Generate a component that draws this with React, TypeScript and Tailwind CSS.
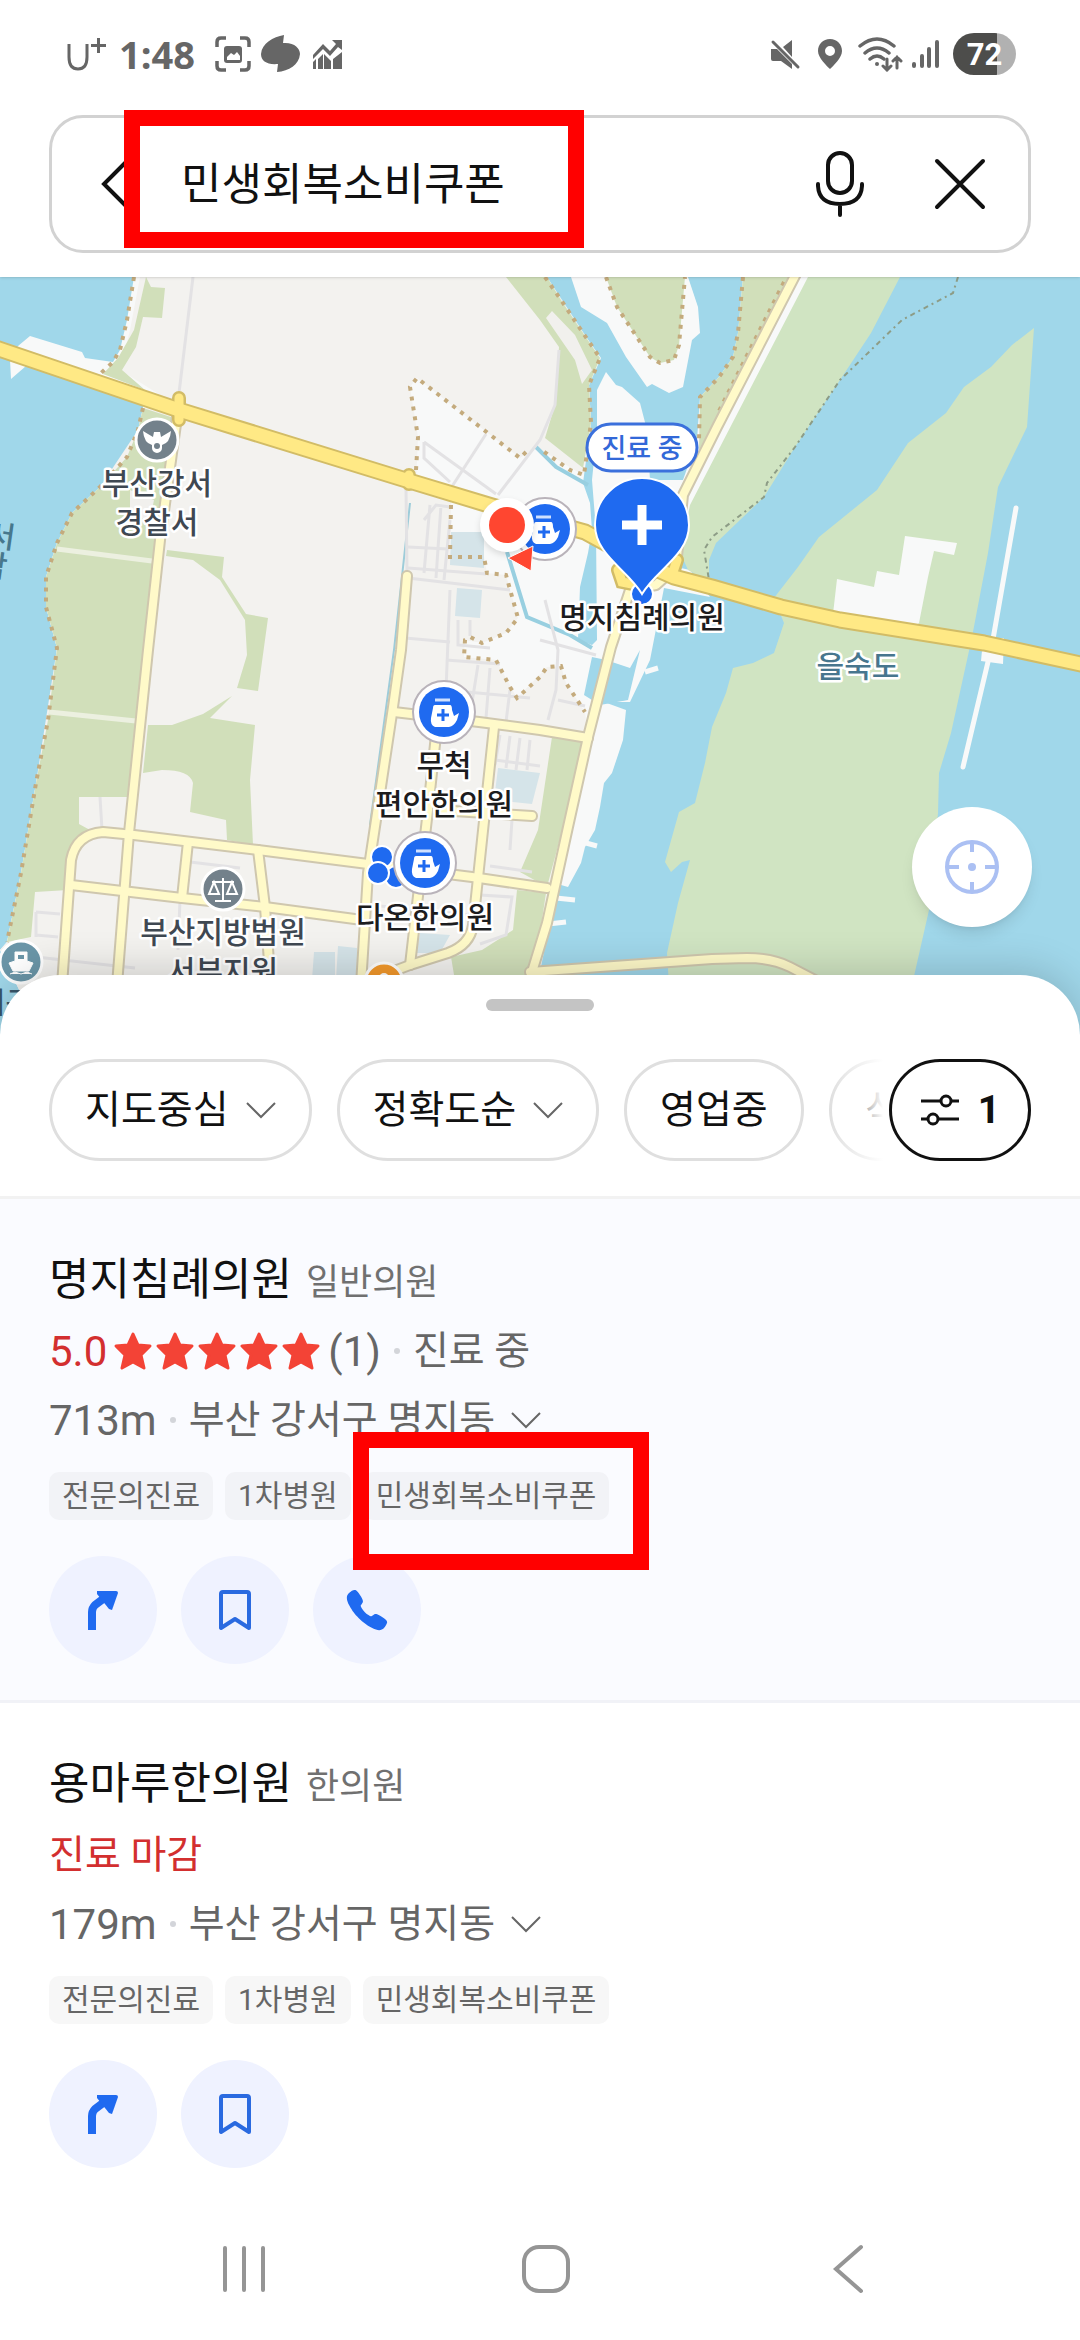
import { IoCall } from "react-icons/io5"

const filters = [
  { title: "지도중심", dropdown: true },
  { title: "정확도순", dropdown: true },
  { title: "영업중", dropdown: false },
  { title: "식당", dropdown: false },
]

const tags = ["전문의진료", "1차병원", "민생회복소비쿠폰"]

const places = [
  {
    name: "명지침례의원",
    category: "일반의원",
    rating: "5.0",
    reviews: 1,
    status: "진료 중",
    distance: "713m",
    address: "부산 강서구 명지동",
    phone: true,
    selected: true,
  },
  {
    name: "용마루한의원",
    category: "한의원",
    rating: "",
    reviews: 0,
    status: "진료 마감",
    distance: "179m",
    address: "부산 강서구 명지동",
    phone: false,
    selected: false,
  },
]

const clinics = [
  { x: 545, y: 529 },
  { x: 444, y: 712 },
  { x: 425, y: 863 },
]

const mainRoad =
  "M-10 346 L179 410 L406 480 L492 506 L585 532 L640 562 L674 577 L712 587 L781 607 L840 620 L984 643 L1090 666"

const localRoads = [
  "M177 417 L160 540 L148 650 L129 833 L117 985",
  "M407 576 L401 650 L393 707 L382 780 L368 873 L361 985",
  "M394 712 L479 722 L540 730 L588 738",
  "M436 735 L428 810 L410 965",
  "M494 727 L482 840 L473 925 Q470 945 448 953 L410 965 L370 980",
  "M437 810 L532 816",
  "M62 985 L71 860 Q76 834 103 832 L134 835 L258 850 L368 864 L472 877 L547 888",
  "M71 885 L182 898 L265 907 L362 920",
  "M188 842 L182 898",
  "M258 850 L265 907 L269 962",
  "M798 270 L717 427 L683 495 L676 567 L656 585 L630 590 L611 647 L588 737 L568 827 L547 923 L528 985",
  "M530 972 L712 959 L747 958 Q772 958 790 967 L815 980",
]

const sideStreets = [
  "M193 277 L179 393",
  "M486 434 L451 488",
  "M424 442 L424 458 L450 482 M424 442 L496 494",
  "M559 350 L555 405 L540 440 L498 495",
  "M406 488 L407 573",
  "M430 505 L424 573 M441 505 L436 578 M450 520 L444 580 M424 520 L436 505 L450 507",
  "M408 547 L448 549 M408 568 L486 574 M408 578 L510 590",
  "M405 638 L450 642 M450 590 L446 690 M458 620 L458 645 L490 648 M470 620 L470 636",
  "M446 660 L500 664 M446 690 L530 698 M478 665 L470 715 M490 668 L486 718 M510 690 L506 722",
  "M545 600 L558 650 L556 690 L548 720 M558 700 L585 706",
  "M540 640 L596 655",
  "M500 735 L495 765 M510 736 L506 768 M520 738 L516 770 M530 740 L527 770",
  "M100 797 L102 830 M36 912 L60 914 M36 935 L58 937 M36 912 L36 937",
  "M36 957 L135 968 M180 900 L178 950",
  "M190 862 L240 868 M370 905 L470 915 M480 895 L512 897 L506 935 L480 944",
  "M495 760 L540 766 M512 820 L510 850 M490 866 L532 872",
]

const dottedTrails = [
  "M134 277 L127 320 L120 350 L113 362 L101 373",
  "M143 408 L138 430 L127 457 L100 487 L72 513 L57 543 L46 577 L46 607 L57 648 L48 720 L36 783 L21 873 L7 942",
  "M416 470 L418 437 L410 387 L417 378 L520 458 L528 450",
  "M451 505 L450 557 L484 557 L487 573 L506 575 L518 618 L506 633 L482 643 L470 637 L465 640 L464 657 L496 660 L510 687 L517 698 L540 677 L547 667 L561 666 L566 683 L585 712",
  "M545 277 L561 300 L581 330 L600 358 L589 385 L591 423 L584 475 L570 470 L540 449",
  "M606 277 L617 307 L650 357 L660 363 L674 360 L679 345 L685 277",
  "M743 277 L738 333 L733 357 L719 377 L700 397 L699 440",
  "M784 282 L717 415",
]

function StatusBar() {
  return (
    <div className="flex h-[108px] items-center justify-between pl-[67px] pr-[64px] text-[#666]">
      <div className="flex items-center">
        <svg width="40" height="36" viewBox="0 0 40 36" fill="none" stroke="currentColor" aria-hidden="true">
          <path d="M2 8 V21 Q2 33 11 33 Q20 33 20 21 V8" strokeWidth="3" />
          <path d="M24 9.500 H39 M31.500 2 V17" strokeWidth="3" />
        </svg>
        <span className="ml-[12px] w-[96px] [font-family:'Open_Sans',sans-serif] text-[38px] font-bold leading-[50px]">1:48</span>
        <svg width="36" height="36" viewBox="0 0 36 36" fill="none" stroke="currentColor" strokeWidth="3.500" aria-hidden="true">
          <path d="M2 11 V6 Q2 2 6 2 H11 M25 2 H30 Q34 2 34 6 V11 M34 25 V30 Q34 34 30 34 H25 M11 34 H6 Q2 34 2 30 V25" />
          <rect x="9" y="10" width="18" height="17" rx="3" fill="currentColor" stroke="none" />
          <path d="M12 24 V21 L16 17 L19 19 L22 16 L25 20 V24 Z" fill="white" stroke="none" />
        </svg>
        <svg className="ml-[9px]" width="40" height="38" viewBox="0 0 40 38" fill="currentColor" aria-hidden="true">
          <path d="M24 0 L23 8 C34 7 40 13 40 19 C39 30 29 36 17 37 L18 29 C7 30 1 26 1 19 C2 8 13 2 24 0 Z" />
        </svg>
        <svg className="ml-[12px]" width="31" height="30" viewBox="0 0 31 30" fill="currentColor" aria-hidden="true">
          <path d="M20 1 H30 V11 L26 8 L18 17 L11 10 L1 20 V16 L11 5 L18 12 L24 5 Z" />
          <path d="M1 23 L4 20 V30 H1 Z M6 20 L11 15 V30 H6 Z M12 15 L19 22 V30 H12 Z M21 20 L30 13 V30 H21 Z" />
        </svg>
      </div>
      <div className="flex items-center">
        <svg width="32" height="32" viewBox="0 0 32 32" fill="currentColor" aria-hidden="true">
          <path d="M14 9 L23 2 V19 Z M2 11 H8 L23 26 V31 L12 23 H4 Q2 23 2 21 Z" />
          <path d="M4 4 L29 29" stroke="currentColor" strokeWidth="3" strokeLinecap="round" />
        </svg>
        <svg className="ml-[16px]" width="26" height="32" viewBox="0 0 26 32" fill="currentColor" fillRule="evenodd" aria-hidden="true">
          <path d="M13 1 C6 1 1 6 1 13 C1 20 10 28 13 31 C16 28 25 20 25 13 C25 6 20 1 13 1 Z M13 8 A5 5 0 1 1 13 18 A5 5 0 1 1 13 8 Z" />
        </svg>
        <svg className="ml-[15px]" width="46" height="36" viewBox="0 0 46 36" fill="none" stroke="currentColor" strokeWidth="3.500" strokeLinecap="round" aria-hidden="true">
          <path d="M2 10 Q19 -4 36 10 M7 17 Q19 7 31 17 M12 23 Q19 17 26 23" />
          <circle cx="19" cy="28" r="2" fill="currentColor" stroke="none" />
          <path d="M29 23 V34 M25 30 L29 34 L33 30 M39 32 V21 M35 25 L39 21 L43 25" strokeWidth="3" />
        </svg>
        <svg className="ml-[7px]" width="28" height="32" viewBox="0 0 28 32" stroke="currentColor" strokeWidth="4" strokeLinecap="round" aria-hidden="true">
          <path d="M3 26 V28 M11 18 V28 M18 11 V28 M26 4 V28" />
        </svg>
        <div className="ml-[14px] flex h-[42px] w-[63px] items-center justify-center overflow-hidden rounded-full bg-linear-to-r from-[#4d4d4b] from-70% to-[#b1b1b1] to-70% [font-family:Roboto,sans-serif] text-[31px] font-bold leading-none text-white">
          72
        </div>
      </div>
    </div>
  )
}

function SearchBar() {
  return (
    <form className="relative mx-[49px] mt-[7px] flex h-[138px] items-center rounded-[34px] border-[3px] border-[#d2d2d2] pl-[47px] pr-[42px]">
      <button type="button" aria-label="뒤로">
        <svg width="30" height="48" viewBox="0 0 30 48" fill="none" stroke="#111" strokeWidth="4">
          <path d="M27 2 L5 24 L27 46" />
        </svg>
      </button>
      <input
        aria-label="검색어"
        defaultValue="민생회복소비쿠폰"
        className="ml-[52px] h-[80px] min-w-0 flex-1 bg-transparent pb-[6px] text-[44px] text-[#111] outline-none"
      />
      <button type="button" aria-label="음성 검색">
        <svg width="50" height="68" viewBox="0 0 50 68" fill="none" stroke="#111" strokeWidth="4" strokeLinecap="round">
          <rect x="13" y="3" width="24" height="40" rx="12" />
          <path d="M3 34 V36 Q4 54 25 54 Q46 54 47 36 V34 M25 54 V65" />
        </svg>
      </button>
      <button type="button" aria-label="지우기" className="ml-[69px]">
        <svg width="52" height="52" viewBox="0 0 52 52" stroke="#111" strokeWidth="4" strokeLinecap="round">
          <path d="M3 3 L49 49 M49 3 L3 49" />
        </svg>
      </button>
      <div className="pointer-events-none absolute -top-[8px] left-[72px] h-[138px] w-[460px] border-[16px] border-[#ff0000]" />
    </form>
  )
}

function ClinicMarker({ x, y }: { x: number; y: number }) {
  return (
    <g transform={`translate(${x} ${y})`}>
      <circle r="31" fill="white" stroke="#b9b3ba" strokeWidth="2" />
      <circle r="25" fill="#1f6af0" />
      <path d="M-9 -12 H6" stroke="#cfe0ff" strokeWidth="3" />
      <path d="M-9 -7 H6 Q8 -7 8 -2 L10 4 L15 1 L13 8 Q10 14 5 15 H-9 Q-14 13 -13 6 L-11 -4 Q-11 -7 -9 -7 Z" fill="white" />
      <path d="M-1 -3 V9 M-7 3 H5" stroke="#1f6af0" strokeWidth="3" />
    </g>
  )
}

function MapView() {
  return (
    <svg
      className="block h-[763px] w-full"
      viewBox="0 277 1080 763"
      preserveAspectRatio="xMidYMin slice"
      role="img"
      aria-label="지도"
    >
      <rect y="277" width="1080" height="763" fill="#a0d7ea" />

      {/* west mainland */}
      <path
        d="M134 277 L127 320 L120 350 L113 362 L85 358 L82 352 L30 336 L18 346 L10 360 L11 379 L26 366 L143 402 L143 408 L138 430 L127 457 L100 487 L72 513 L57 543 L46 577 L46 607 L57 648 L48 720 L36 783 L21 873 L7 942 L0 950 L24 1000 L24 1040 L528 1040 L532 985 L547 933 L561 885 L568 887 L581 863 L585 847 L595 830 L600 807 L604 783 L612 773 L623 740 L626 710 L604 702 L630 702 L650 660 L664 588 L710 597 L690 570 L676 567 L810 277 L743 277 L738 333 L733 357 L719 377 L700 397 L697 440 L683 480 L650 480 L647 430 L640 403 L622 387 L616 385 L606 372 L597 390 L597 430 L592 480 L596 530 L597 640 L592 645 L578 640 L580 587 L588 553 L592 530 L590 503 L583 483 L591 423 L589 385 L601 358 L581 330 L561 300 L547 277 Z"
        fill="#f8f9f9"
      />
      <path
        d="M140 277 L130 330 L120 370 L178 406 L143 408 L138 430 L100 487 L57 543 L46 577 L46 607 L57 648 L36 783 L21 873 L7 942 L0 950 L24 1000 L24 1040 L526 1040 L588 737 L585 712 L566 683 L561 666 L547 667 L517 698 L496 660 L464 657 L465 640 L482 643 L506 633 L518 618 L506 575 L487 573 L484 557 L450 557 L451 500 L416 485 L418 437 L410 387 L417 378 L520 458 L536 447 L583 475 L591 423 L589 385 L600 358 L547 277 Z"
        fill="#f3f2ef"
      />
      <path d="M571 277 L581 307 L607 323 L626 357 L647 387 L652 384 L669 393 L683 387 L692 340 L700 333 L698 307 L688 277 Z" fill="#f8f9f9" />
      <path d="M592 657 L606 660 L630 668 L640 650 L628 700 L600 705 L584 695 Z" fill="#a0d7ea" />
      <path d="M598 660 L618 665 L630 678 L626 700 L604 702 Z" fill="#a0d7ea" />

      {/* parks */}
      <g fill="#d1dfba">
        <path d="M146 277 L151 287 L165 288 L162 318 L143 317 L136 347 L122 370 L145 390 L103 374 L118 358 L134 330 Z" />
        <path d="M143 408 L174 418 L152 600 L129 797 L79 797 L79 824 L90 830 Q72 840 68 890 L35 892 L31 937 L7 942 L21 873 L36 783 L48 720 L57 648 L46 607 L46 577 L57 543 L72 513 L100 487 L127 457 L138 430 Z" />
        <path d="M167 550 L224 557 L222 577 L246 614 L268 618 L258 691 L237 688 L247 655 L245 620 L220 580 L193 560 L166 556 Z" />
        <path d="M148 725 L172 725 L203 714 L232 696 L210 718 L255 725 L250 780 L253 845 L227 840 L226 820 L190 812 L193 783 Q190 770 162 770 L143 773 Z" />
        <path d="M506 277 L547 277 L561 300 L581 330 L600 358 L589 385 L591 423 L583 468 L545 438 L555 405 L559 347 L540 320 Z" />
        <path d="M606 277 L617 307 L650 357 L660 363 L674 360 L679 345 L685 277 Z" />
        <path d="M743 277 L738 333 L733 357 L719 377 L700 397 L699 450 L792 277 Z" />
        <path d="M552 737 L586 742 L547 887 L520 872 L538 830 Z" />
        <path d="M517 890 L546 893 L524 1040 L465 1040 L451 957 L482 950 L513 930 Z" />
      </g>
      <path d="M552 311 L575 335 L592 370 L582 384 L575 360 L546 318 Z M130 490 L154 500 L150 520 L130 515 Z" fill="#f1f0ed" />
      <g fill="#d0e4c2">
        <path d="M808 277 L900 277 L871 333 L840 380 L795 447 L764 497 L716 543 L709 560 L709 582 L688 570 L680 552 L690 505 Z" />
        <path d="M1034 328 L1027 427 L998 487 L988 553 L972 637 L967 660 L951 733 L939 773 L938 813 L929 910 L912 985 L669 985 L667 953 L678 903 L690 860 L682 862 L671 872 L665 862 L679 812 L695 803 L705 763 L712 727 L726 693 L733 668 L753 663 L774 653 L784 623 L774 598 L798 567 L819 537 L840 520 L877 490 L908 443 L946 413 L964 387 L991 367 L1012 345 Z" />
      </g>
      <path d="M905 536 L957 543 L954 555 L934 551 L928 577 L919 623 L914 628 L833 614 L837 579 L874 587 L877 571 L899 575 Z" fill="#f8f9f9" />
      <path d="M1016 508 L992 645 L963 767" fill="none" stroke="#f8f9f9" strokeWidth="5" strokeLinecap="round" />
      <path d="M983 640 L1004 638 L1003 664 L981 661 Z" fill="#f8f9f9" />
      <path d="M57 549 L152 561 M49 712 L136 721" stroke="#ecf0e0" strokeWidth="5" />
      <path d="M451 532 H484 V568 L450 565 Z M457 588 L482 590 L480 618 L455 616 Z M498 768 L540 773 L532 804 L494 800 Z M314 952 L335 952 V980 H312 Z M338 946 L357 948 V980 H336 Z M420 933 L450 935 L440 953 L416 953 Z" fill="#d5e4e9" />
      <path d="M410 503 L394 650 L370 825" fill="none" stroke="#9dccd9" strokeWidth="2" />
      <path d="M507 552 L527 617 L570 635 L592 648 M536 447 L556 467 L588 485" fill="none" stroke="#98cfe0" strokeWidth="4" />
      <path d="M556 898 L575 900 M548 924 L566 922 M586 843 L597 846 M645 672 L658 668" stroke="#f8f9f9" strokeWidth="5" />

      {/* streets */}
      <g fill="none" stroke="#e3e2e4" strokeWidth="3">
        {sideStreets.map((d) => (
          <path key={d} d={d} />
        ))}
      </g>
      <g fill="none" stroke="#c4ab7d" strokeWidth="4" strokeDasharray="4 6">
        {dottedTrails.map((d) => (
          <path key={d} d={d} />
        ))}
      </g>
      <path
        d="M958 277 L953 293 L902 320 L840 380 L795 447 L767 483 L764 497 L712 537 L704 550 L709 580"
        fill="none"
        stroke="#8d9c86"
        strokeWidth="2"
        strokeDasharray="5 4 2 4"
      />
      <g fill="none" stroke="#cfc7ae" strokeWidth="12" strokeLinecap="round" strokeLinejoin="round">
        {localRoads.map((d) => (
          <path key={d} d={d} />
        ))}
      </g>
      <g fill="none" stroke="#fffac9" strokeWidth="8" strokeLinecap="round" strokeLinejoin="round">
        {localRoads.map((d) => (
          <path key={d} d={d} />
        ))}
      </g>
      <path d={mainRoad} fill="none" stroke="#d2bc66" strokeWidth="17" strokeLinejoin="round" />
      <path d="M179 398 V420 M409 475 V484 M618 570 L622 582 L632 584 M677 560 L672 575" fill="none" stroke="#d2bc66" strokeWidth="14" strokeLinecap="round" />
      <path d={mainRoad} fill="none" stroke="#ffe985" strokeWidth="13" strokeLinejoin="round" />
      <path d="M179 398 V420 M409 475 V484 M618 570 L622 582 L632 584 M677 560 L672 575" fill="none" stroke="#ffe985" strokeWidth="9" strokeLinecap="round" />

      {/* landmarks */}
      <g stroke="white" strokeWidth="3">
        <circle cx="157" cy="440" r="21" fill="#73818b" />
        <circle cx="223" cy="889" r="21" fill="#73818b" />
        <circle cx="21" cy="962" r="21" fill="#6b96a8" />
        <circle cx="384" cy="982" r="19" fill="#f59a2c" />
      </g>
      <path d="M143 431 L153 437 L154 432 H160 L161 437 L171 431 Q170 443 162 445 V448 A5 5 0 0 1 152 448 V445 Q144 443 143 431 Z" fill="white" />
      <circle cx="157" cy="446" r="3" fill="#73818b" />
      <path d="M223 878 V901 M215 901 H231 M212 882 H234 M214 882 L209 894 H219 Z M232 882 L227 894 H237 Z" fill="none" stroke="white" strokeWidth="2" />
      <path d="M15 952 H27 V961 L33 963 L29 971 H13 L9 963 L15 961 Z M10 974 L15 972 L21 974 L27 972 L32 974" fill="white" stroke="white" strokeWidth="1" />
      <path d="M18 955 H24 V959 H18 Z" fill="#6b96a8" />
      <circle cx="384" cy="978" r="5" fill="white" />

      {/* clinics */}
      <g fill="#1f6af0" stroke="white" strokeWidth="2">
        <circle cx="382" cy="857" r="11" />
        <circle cx="396" cy="877" r="11" />
        <circle cx="378" cy="873" r="11" />
        <circle cx="642" cy="594" r="11" />
      </g>
      {clinics.map((clinic) => (
        <ClinicMarker key={clinic.x} x={clinic.x} y={clinic.y} />
      ))}
      <circle cx="507" cy="525" r="27" fill="white" className="drop-shadow-md" />
      <circle cx="507" cy="525" r="18" fill="#ff4630" />
      <path d="M508 558 L533 546 L531 571 Z" fill="#ff4630" stroke="white" strokeWidth="1" />
      <path d="M642 594 C628 570 595 555 595 525 A47 47 0 0 1 689 525 C689 555 656 570 642 594 Z" fill="#1f6af0" stroke="white" strokeWidth="2" />
      <path d="M642 505 V545 M622 525 H662" stroke="white" strokeWidth="9" />
      <rect x="587" y="424" width="110" height="47" rx="24" fill="white" stroke="#3b70dc" strokeWidth="3" />
      <text x="642" y="458" fontSize="27" fontWeight="500" fill="#3268d8" textAnchor="middle">진료 중</text>

      <g fontSize="30" fontWeight="500" textAnchor="middle" stroke="white" strokeWidth="5" strokeLinejoin="round" paintOrder="stroke">
        <g fill="#3f4852">
          <text x="157" y="494">부산강서</text>
          <text x="157" y="533">경찰서</text>
          <text x="223" y="943">부산지방법원</text>
          <text x="223" y="982">서부지원</text>
        </g>
        <g fill="#1c1c1e">
          <text x="642" y="628">명지침례의원</text>
          <text x="444" y="776">무척</text>
          <text x="444" y="815">편안한의원</text>
          <text x="425" y="928">다온한의원</text>
        </g>
        <text x="858" y="677" fill="#47768e">을숙도</text>
      </g>
      <g fontSize="30" fontWeight="500" fill="#47788d">
        <text x="-13" y="547" transform="rotate(8 0 540)">서</text>
        <text x="-21" y="577" transform="rotate(8 0 570)">낙</text>
        <text x="-22" y="1013" fill="#38566a">시구</text>
      </g>
    </svg>
  )
}

function ChevronDown() {
  return (
    <svg className="shrink-0" width="30" height="18" viewBox="0 0 30 18" fill="none" stroke="#666" strokeWidth="2" aria-hidden="true">
      <path d="M1 2 L15 16 L29 2" />
    </svg>
  )
}

function Star() {
  return (
    <svg width="42" height="40" viewBox="0 0 42 40" aria-hidden="true">
      <path
        d="M21 3 L26 14 L38 15 L29 24 L32 37 L21 31 L10 37 L13 24 L4 15 L16 14 Z"
        fill="#f34336"
        stroke="#f34336"
        strokeWidth="3"
        strokeLinejoin="round"
      />
    </svg>
  )
}

function FilterRow() {
  return (
    <div className="flex px-[49px]">
      <div className="relative min-w-0 flex-1 overflow-hidden">
        <div className="flex gap-[25px]">
          {filters.map((filter) => (
            <button
              key={filter.title}
              type="button"
              className="flex h-[102px] shrink-0 items-center gap-[17px] rounded-full border-[3px] border-[#dfdfdf] px-[33px] text-[39px] text-[#111]"
            >
              {filter.title}
              {filter.dropdown && <ChevronDown />}
            </button>
          ))}
        </div>
        <div className="absolute inset-y-0 right-0 w-[60px] bg-linear-to-r from-white/0 to-white to-90%" />
      </div>
      <button
        type="button"
        aria-label="필터 1개 적용"
        className="flex h-[102px] w-[142px] shrink-0 items-center justify-center gap-[18px] rounded-full border-[3px] border-[#111] text-[39px] font-bold text-[#111]"
      >
        <svg width="40" height="32" viewBox="0 0 40 32" fill="none" stroke="#111" strokeWidth="3" aria-hidden="true">
          <path d="M1 7 H21 M31 7 H39 M1 25 H9 M18 25 H39" />
          <circle cx="26" cy="7" r="5" />
          <circle cx="13" cy="25" r="5" />
        </svg>
        1
      </button>
    </div>
  )
}

function PlaceCard({ place }: { place: (typeof places)[number] }) {
  const circle = "flex size-[108px] items-center justify-center rounded-full bg-[#eff2ff]"

  return (
    <article className={`border-b-[3px] px-[49px] pb-[36px] pt-[51px] ${place.selected ? "border-[#f1f2f7] bg-[#fafbff]" : "border-white bg-white"}`}>
      <div className="flex h-[60px] items-baseline gap-[14px] leading-[60px]">
        <h2 className="text-[44px] text-[#111]">{place.name}</h2>
        <span className="text-[36px] text-[#707070]">{place.category}</span>
      </div>
      <div className="flex h-[82px] items-center text-[39px] text-[#666]">
        {place.rating ? (
          <>
            <span className="text-[42px] text-[#d32f2f]">{place.rating}</span>
            <span className="ml-[5px] flex">
              {[1, 2, 3, 4, 5].map((n) => (
                <Star key={n} />
              ))}
            </span>
            <span className="ml-[6px] text-[42px]">({place.reviews})</span>
            <span className="mx-[13px] size-[6px] rounded-full bg-[#d3d5da]" />
            <span>{place.status}</span>
          </>
        ) : (
          <span className="text-[#d32f2f]">{place.status}</span>
        )}
      </div>
      <div className="flex h-[56px] items-center text-[39px] text-[#666]">
        <span className="text-[42px]">{place.distance}</span>
        <span className="mx-[13px] size-[6px] rounded-full bg-[#d3d5da]" />
        <button type="button" className="flex items-center gap-[16px]">
          {place.address}
          <ChevronDown />
        </button>
      </div>
      <ul className="relative mt-[24px] flex gap-[12px]">
        {tags.map((tag) => (
          <li
            key={tag}
            className={`h-[48px] rounded-[10px] px-[13px] text-[30px] leading-[48px] text-[#666] ${place.selected ? "bg-[#f2f3f7]" : "bg-[#f7f7f7]"}`}
          >
            {tag}
          </li>
        ))}
        {place.selected && (
          <li aria-hidden="true" className="pointer-events-none absolute -top-[40px] left-[304px] z-10 h-[138px] w-[296px] border-[16px] border-[#ff0000]" />
        )}
      </ul>
      <div className="mt-[36px] flex gap-[24px]">
        <button type="button" aria-label="길찾기" className={circle}>
          <svg width="44" height="44" viewBox="0 0 44 44">
            <path d="M11 42 V24 Q11 20 14 17 L22 11" fill="none" stroke="#1f6af0" strokeWidth="8" />
            <path d="M16 3 H35 Q37 3 37 5 L31 22 L28 21 L16 6 Z" fill="#1f6af0" />
          </svg>
        </button>
        <button type="button" aria-label="저장" className={circle}>
          <svg width="44" height="44" viewBox="0 0 44 44" fill="none" stroke="#2a6ae0" strokeWidth="4" strokeLinejoin="round">
            <path d="M8 40 V6 Q8 4 10 4 H34 Q36 4 36 6 V40 L22 31 Z" />
          </svg>
        </button>
        {place.phone && (
          <a href="tel:" aria-label="전화" className={circle}>
            <IoCall className="size-[46px] text-[#1f6af0]" />
          </a>
        )}
      </div>
    </article>
  )
}

function SystemNav() {
  return (
    <nav className="relative flex items-center justify-between bg-white pb-[41px] pl-[214px] pr-[202px] pt-[32px]">
      <button type="button" aria-label="최근 앱">
        <svg width="60" height="60" viewBox="0 0 60 60" stroke="#959595" strokeWidth="4" strokeLinecap="round">
          <path d="M11 9 V51 M30 9 V51 M49 9 V51" />
        </svg>
      </button>
      <button type="button" aria-label="홈">
        <svg width="60" height="60" viewBox="0 0 60 60" fill="none" stroke="#959595" strokeWidth="4">
          <rect x="8" y="8" width="44" height="44" rx="15" />
        </svg>
      </button>
      <button type="button" aria-label="뒤로 가기">
        <svg width="60" height="60" viewBox="0 0 60 60" fill="none" stroke="#959595" strokeWidth="4" strokeLinecap="round">
          <path d="M43 8 L18 30 L43 52" />
        </svg>
      </button>
    </nav>
  )
}

export default function App() {
  return (
    <div className="min-h-screen overflow-hidden bg-white [font-family:Roboto,'Noto_Sans_CJK_KR',sans-serif]">
      <header className="relative z-10 bg-white pb-[24px] shadow-sm">
        <StatusBar />
        <SearchBar />
      </header>
      <main>
        <section className="relative">
          <MapView />
          <button
            type="button"
            aria-label="현재 위치"
            className="absolute right-[48px] top-[530px] flex size-[120px] items-center justify-center rounded-full bg-white shadow-lg"
          >
            <svg width="56" height="56" viewBox="0 0 56 56" fill="none" stroke="#abc0f3" strokeWidth="4">
              <circle cx="28" cy="28" r="25" />
              <path d="M28 3 V13 M28 43 V53 M3 28 H15 M41 28 H53" />
              <circle cx="28" cy="28" r="4" fill="#abc0f3" stroke="none" />
            </svg>
          </button>
        </section>
        <section className="relative -mt-[65px] rounded-t-[60px] bg-white pt-[24px] shadow-[0_-4px_40px_rgba(0,0,0,0.18)]">
          <div className="mx-auto mb-[48px] h-[12px] w-[108px] rounded-full bg-[#c4c4c4]" />
          <FilterRow />
          <div className="mt-[35px] border-t-[3px] border-[#f2f2f2]">
            {places.map((place) => (
              <PlaceCard key={place.name} place={place} />
            ))}
          </div>
        </section>
      </main>
      <SystemNav />
    </div>
  )
}
